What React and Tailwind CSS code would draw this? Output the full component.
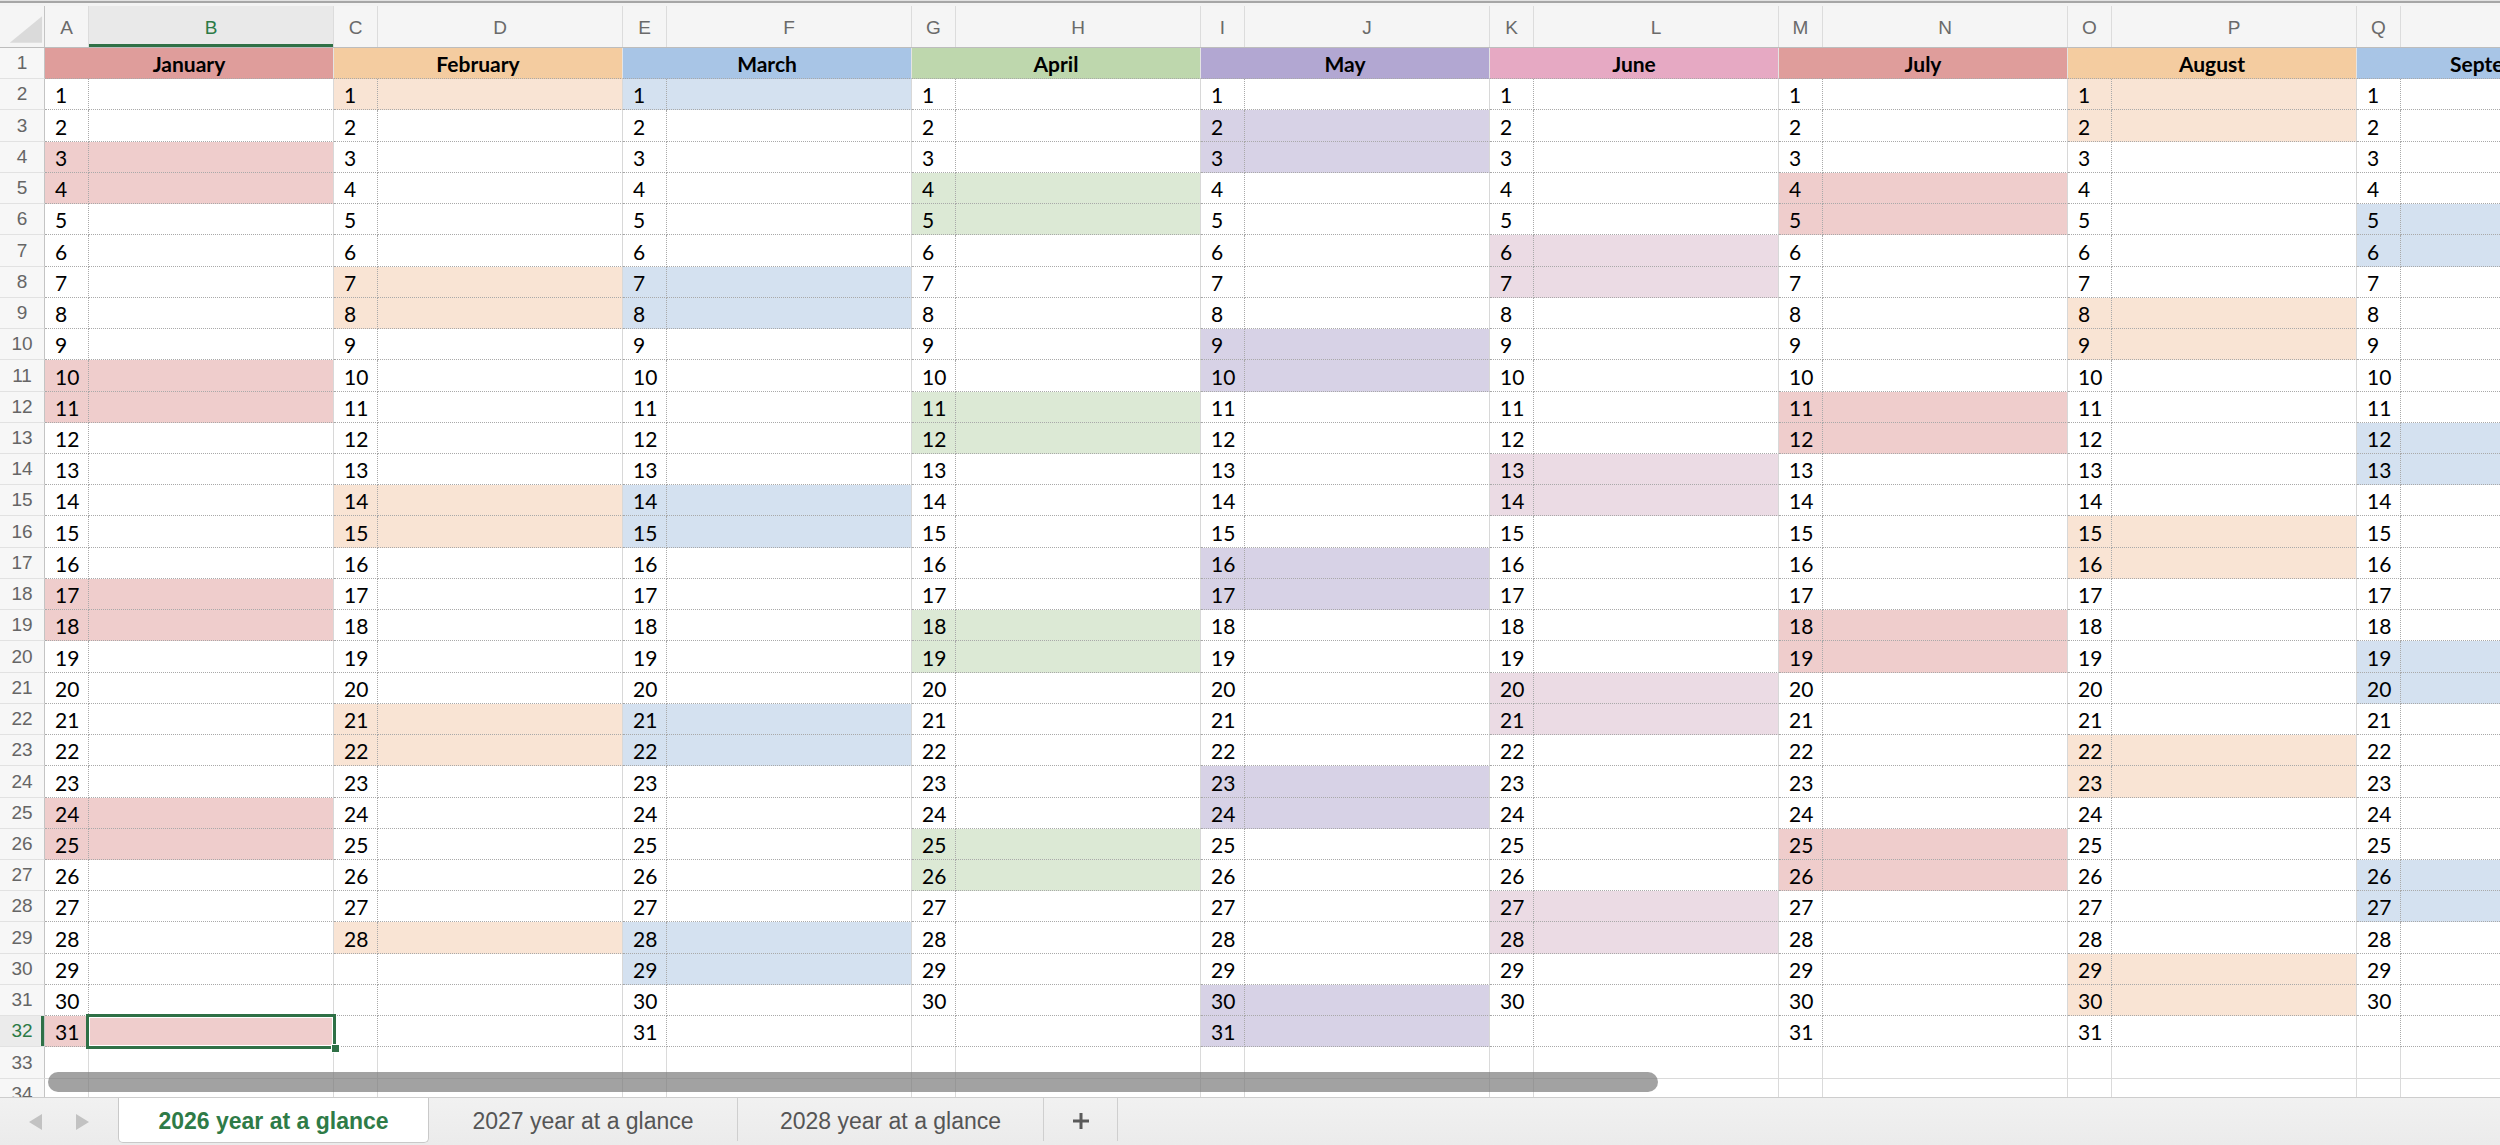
import React from "react";

const MONTHS = [
  { name: "January", head: "bg-[#df9d9b]", light: "bg-[#efcdcc]" },
  { name: "February", head: "bg-[#f4cca0]", light: "bg-[#f9e4d4]" },
  { name: "March", head: "bg-[#a8c5e6]", light: "bg-[#d4e1f0]" },
  { name: "April", head: "bg-[#bed7ad]", light: "bg-[#dce9d5]" },
  { name: "May", head: "bg-[#b2a7d2]", light: "bg-[#d7d2e6]" },
  { name: "June", head: "bg-[#e6a9c3]", light: "bg-[#ebdbe4]" },
  { name: "July", head: "bg-[#df9d9b]", light: "bg-[#efcdcc]" },
  { name: "August", head: "bg-[#f4cca0]", light: "bg-[#f9e4d4]" },
  { name: "September", head: "bg-[#a8c5e6]", light: "bg-[#d4e1f0]" },
];

const LETTERS = "ABCDEFGHIJKLMNOPQR".split("");

function rowH(i) {
  const a = Math.round(i * 31.23);
  const b = Math.round((i + 1) * 31.23);
  return b - a === 32 ? "h-[32px]" : "h-[31px]";
}

function RowHeader({ n }) {
  const sel = n === 32;
  return (
    <div
      className={`w-[45px] shrink-0 border-r border-b border-r-[#c4c4c4] border-b-[#e2e2e2] flex items-end justify-center pb-[5px] text-[19px] leading-[20px] font-['Liberation_Sans',sans-serif] ${
        sel
          ? "bg-[#ebebeb] text-[#2c7a46] shadow-[inset_-3px_0_0_#2f7046]"
          : "bg-[#f7f7f7] text-[#666666]"
      }`}
    >
      {n}
    </div>
  );
}

function ColumnHeaderRow() {
  return (
    <div className="flex h-[42px] shrink-0 border-b border-[#bdbdbd] bg-[#f5f5f5]">
      <div className="w-[45px] shrink-0 border-r border-[#c4c4c4] flex items-end justify-end">
        <svg width="45" height="41" viewBox="0 0 45 41">
          <polygon points="10,37 43,10 43,37" fill="#dadada" />
        </svg>
      </div>
      {LETTERS.map((l, i) => {
        const wide = i % 2 === 1;
        const sel = l === "B";
        return (
          <div
            key={l}
            className={`${wide ? "w-[245px]" : "w-[44px]"} shrink-0 border-r border-[#dcdcdc] flex items-center justify-center pt-[3px] text-[19px] font-['Liberation_Sans',sans-serif] ${
              sel
                ? "bg-[#e9e9e9] text-[#2c7a46] shadow-[inset_0_-3px_0_#2f7046]"
                : "text-[#6a6a6a]"
            }`}
          >
            {l}
          </div>
        );
      })}
    </div>
  );
}

function MonthHeaderRow() {
  return (
    <div className={`flex ${rowH(0)} shrink-0`}>
      <RowHeader n={1} />
      {MONTHS.map((m) => (
        <div
          key={m.name}
          className={`w-[289px] shrink-0 ${m.head} border-r border-b border-r-[#e4e4e4] border-b-[#a9a9a9] [border-bottom-style:dotted] flex items-end justify-center pb-[3px] text-[21px] leading-[22px] font-bold text-black`}
        >
          {m.name}
        </div>
      ))}
    </div>
  );
}

function Selection() {
  return (
    <div className="absolute left-[-3px] top-[-2px] right-[-3px] bottom-[-3px] border-[3px] border-[#2f7046] shadow-[inset_0_0_0_1px_#ffffff] z-10">
      <div className="absolute right-[-7px] bottom-[-7px] w-[9px] h-[9px] bg-[#2f7046] border border-white" />
    </div>
  );
}

function DayRow({ r }) {
  const d = r - 1;
  return (
    <div className={`flex ${rowH(r - 1)} shrink-0`}>
      <RowHeader n={r} />
      {MONTHS.map((m, mi) => {
        const dim = new Date(2026, mi + 1, 0).getDate();
        const has = d <= dim;
        const dow = has ? new Date(2026, mi, d).getDay() : -1;
        const we = dow === 0 || dow === 6;
        const bg = we ? m.light : "bg-white";
        const selected = r === 32 && mi === 0;
        return (
          <React.Fragment key={m.name}>
            <div
              className={`w-[44px] shrink-0 ${bg} border-r border-b border-dotted border-[#a9a9a9] flex items-end pl-[10px] pb-[3px] text-[21px] leading-[22px] text-black`}
            >
              {has ? d : ""}
            </div>
            <div
              className={`relative w-[245px] shrink-0 ${bg} border-r border-b border-r-[#d8d8d8] border-b-[#a9a9a9] [border-bottom-style:dotted]`}
            >
              {selected && <Selection />}
            </div>
          </React.Fragment>
        );
      })}
    </div>
  );
}

function EmptyRow({ r }) {
  return (
    <div className={`flex ${rowH(r - 1)} shrink-0`}>
      <RowHeader n={r} />
      {LETTERS.map((l, i) => (
        <div
          key={l}
          className={`${i % 2 === 1 ? "w-[245px]" : "w-[44px]"} shrink-0 bg-white border-r border-b border-[#dadada]`}
        />
      ))}
    </div>
  );
}

function TabBar() {
  return (
    <div className="h-[48px] shrink-0 border-t border-[#cdcdcd] bg-gradient-to-b from-[#f1f1f1] to-[#ebebeb] flex items-start font-['Liberation_Sans',sans-serif]">
      <div className="w-[118px] h-[44px] shrink-0 flex items-center pl-[29px] gap-[32px] pt-[4px]">
        <svg width="14" height="16" viewBox="0 0 14 16">
          <polygon points="13,0 13,16 0,8" fill="#c2c2c2" />
        </svg>
        <svg width="14" height="16" viewBox="0 0 14 16">
          <polygon points="1,0 1,16 14,8" fill="#c2c2c2" />
        </svg>
      </div>
      <div className="w-[311px] h-[45px] shrink-0 bg-white border-x border-b border-[#c9c9c9] rounded-b-[5px] flex items-center justify-center pt-[3px] text-[23px] font-bold text-[#2e7b47]">
        2026 year at a glance
      </div>
      <div className="w-[309px] h-[43px] shrink-0 border-r border-[#cfcfcf] flex items-center justify-center pt-[3px] text-[23px] text-[#555555]">
        2027 year at a glance
      </div>
      <div className="w-[306px] h-[43px] shrink-0 border-r border-[#cfcfcf] flex items-center justify-center pt-[3px] text-[23px] text-[#555555]">
        2028 year at a glance
      </div>
      <div className="w-[74px] h-[43px] shrink-0 border-r border-[#cfcfcf] flex items-center justify-center pt-[3px]">
        <svg width="16" height="16" viewBox="0 0 16 16">
          <rect x="0" y="6.5" width="16" height="3" fill="#5a5a5a" />
          <rect x="6.5" y="0" width="3" height="16" fill="#5a5a5a" />
        </svg>
      </div>
    </div>
  );
}

export default function App() {
  const rows = [];
  for (let r = 2; r <= 32; r++) rows.push(<DayRow key={r} r={r} />);
  return (
    <div className="w-[2500px] h-[1145px] overflow-hidden bg-white flex flex-col font-['Lato',sans-serif]">
      <div className="h-[1px] shrink-0 bg-[#e2e2e2]" />
      <div className="h-[2px] shrink-0 bg-[#a6a6a6]" />
      <div className="h-[3px] shrink-0 bg-[#f3f3f3]" />
      <div className="relative h-[1091px] shrink-0 overflow-hidden flex flex-col">
        <ColumnHeaderRow />
        <MonthHeaderRow />
        {rows}
        <EmptyRow r={33} />
        <EmptyRow r={34} />
        <div className="absolute left-[48px] top-[1066px] w-[1610px] h-[20px] rounded-full bg-[#7a7a7a]/70" />
      </div>
      <TabBar />
    </div>
  );
}
